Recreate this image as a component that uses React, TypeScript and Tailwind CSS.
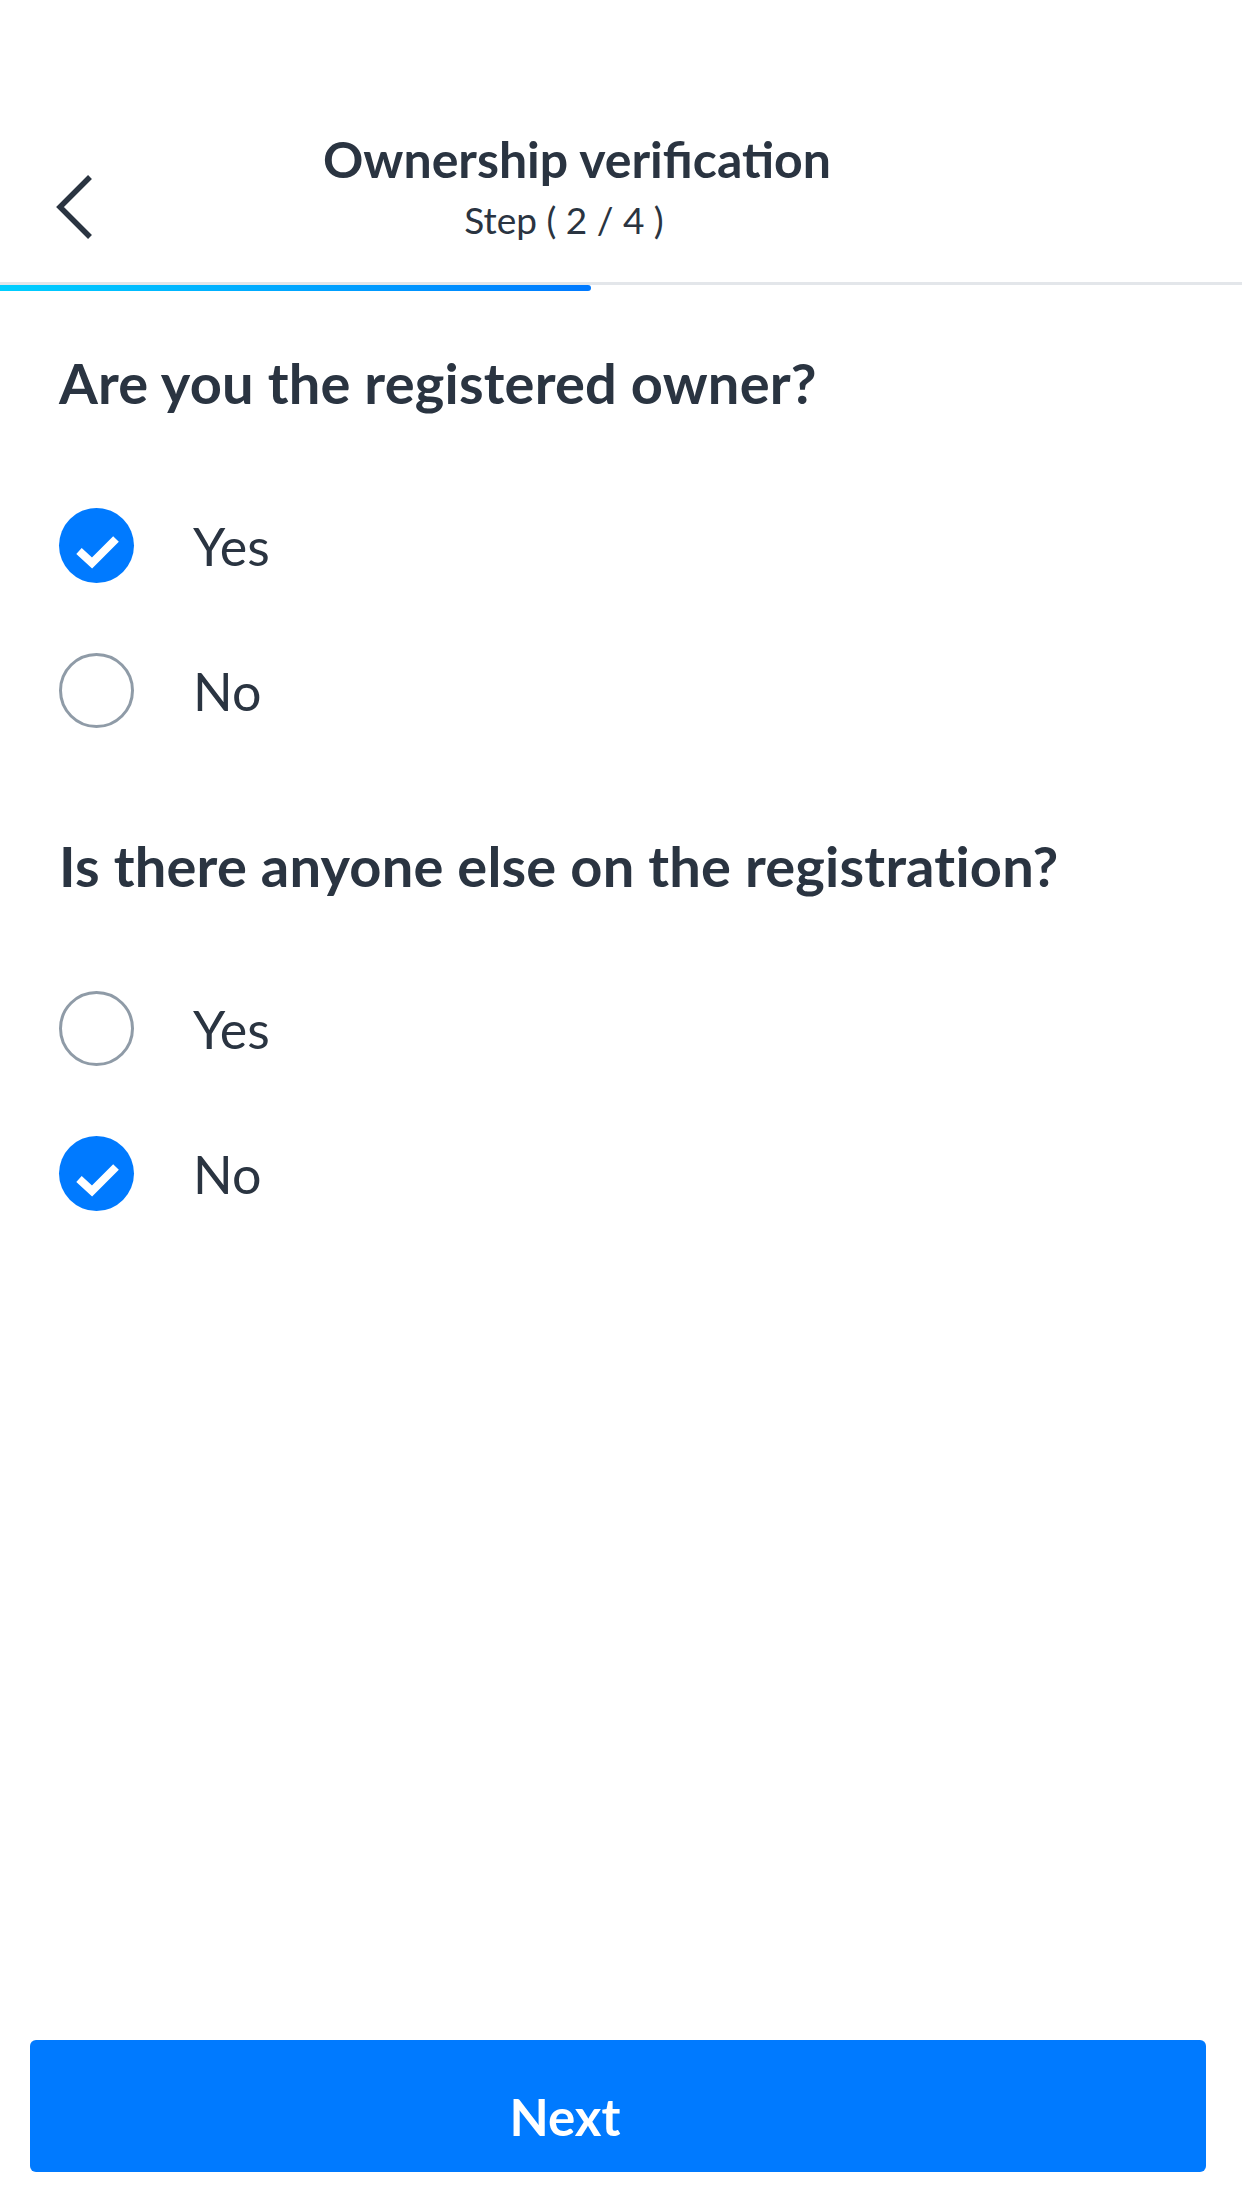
import { useState } from "react";

function Radio({ checked }: { checked: boolean }) {
  if (checked)
    return (
      <div className="flex h-[75px] w-[75px] shrink-0 items-center justify-center rounded-full bg-[#007aff]">
        <svg width="75" height="75" viewBox="0 0 75 75">
          <path
            d="M20 43 L33 55 L57 31"
            fill="none"
            stroke="white"
            strokeWidth="8"
            strokeLinecap="butt"
            strokeLinejoin="miter"
          />
        </svg>
      </div>
    );
  return (
    <div className="h-[75px] w-[75px] shrink-0 rounded-full border-[3px] border-[#8f9ba7]" />
  );
}

function Question({
  title,
  value,
  onChange,
}: {
  title: string;
  value: string;
  onChange: (v: string) => void;
}) {
  return (
    <section className="px-[59px]">
      <h2 className="text-[56px] font-bold leading-[64px] tracking-[0.2px] text-[#2a3441]">
        {title}
      </h2>
      <div className="mt-[93px] flex flex-col gap-[70px]">
        {["Yes", "No"].map((opt) => (
          <button
            key={opt}
            onClick={() => onChange(opt)}
            className="flex items-center gap-[59px] text-left"
          >
            <Radio checked={value === opt} />
            <span className="text-[52px] leading-none text-[#2a3441]">
              {opt}
            </span>
          </button>
        ))}
      </div>
    </section>
  );
}

export default function App() {
  const [owner, setOwner] = useState("Yes");
  const [others, setOthers] = useState("No");

  return (
    <main className="flex min-h-screen flex-col bg-white font-['Lato',_sans-serif]">
      <header className="relative flex h-[282px] flex-col items-center pt-[134px]">
        <button className="absolute left-[56px] top-[175px]">
          <svg width="36" height="64" viewBox="0 0 36 64">
            <path
              d="M34 2 L4 32 L34 62"
              fill="none"
              stroke="#2a3441"
              strokeWidth="5.5"
            />
          </svg>
        </button>
        <h1 className="mr-[88px] text-[50px] font-bold leading-[50px] text-[#2a3441]">
          Ownership verification
        </h1>
        <p className="mr-[114px] mt-[16px] text-[37px] leading-[40px] text-[#2a3441]">
          Step ( 2 / 4 )
        </p>
      </header>
      <div className="h-[3px] bg-[#e3e6ea]" />
      <div className="h-[6px] w-[591px] rounded-r-full bg-gradient-to-r from-[#00cfff] to-[#0079ff]" />

      <div className="mt-[60px] flex flex-col gap-[106px]">
        <Question
          title="Are you the registered owner?"
          value={owner}
          onChange={setOwner}
        />
        <Question
          title="Is there anyone else on the registration?"
          value={others}
          onChange={setOthers}
        />
      </div>

      <div className="flex-1" />
      <div className="pb-[36px] pl-[30px] pr-[36px]">
        <button className="flex h-[132px] w-full items-center justify-center rounded-[6px] bg-[#007aff] pr-[106px] pt-[22px] text-[51px] font-bold text-white">
          Next
        </button>
      </div>
    </main>
  );
}
